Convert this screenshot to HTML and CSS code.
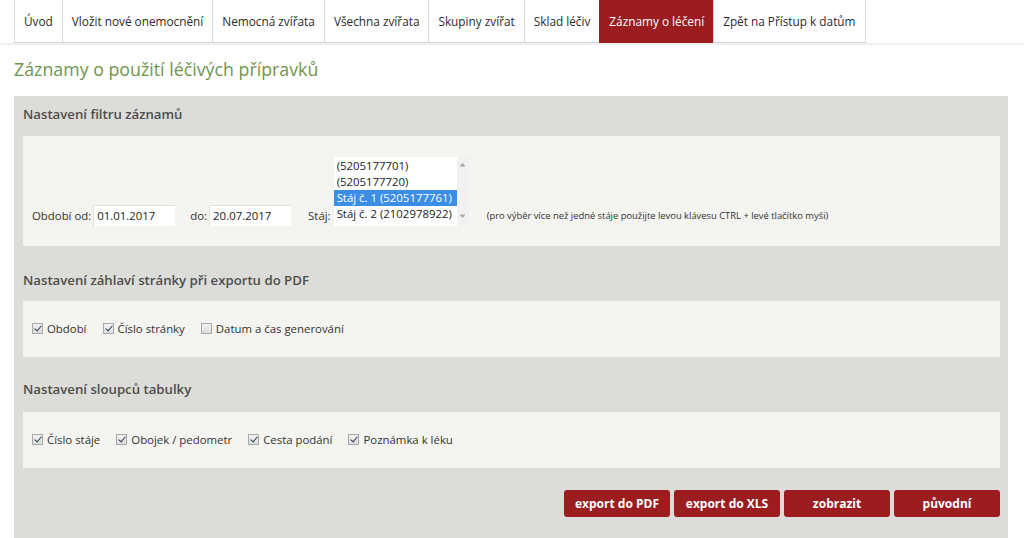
FILE: index.html
```html
<!DOCTYPE html>
<html lang="cs">
<head>
<meta charset="utf-8">
<title>Záznamy o léčení</title>
<link rel="stylesheet" href="styles.css">
</head>
<body>
<nav class="tabs">
  <a class="tab">Úvod</a>
  <a class="tab">Vložit nové onemocnění</a>
  <a class="tab">Nemocná zvířata</a>
  <a class="tab">Všechna zvířata</a>
  <a class="tab">Skupiny zvířat</a>
  <a class="tab">Sklad léčiv</a>
  <a class="tab active">Záznamy o léčení</a>
  <a class="tab">Zpět na Přístup k datům</a>
</nav>
<main class="main">
  <h1 class="page-title">Záznamy o použití léčivých přípravků</h1>
  <section class="panel">
    <h2 class="sec-title first">Nastavení filtru záznamů</h2>
    <div class="box box-filter">
      <label class="lbl">Období od:</label>
      <div class="input">01.01.2017</div>
      <label class="lbl lbl-do">do:</label>
      <div class="input">20.07.2017</div>
      <label class="lbl lbl-staj">Stáj:</label>
      <div class="listbox">
        <div class="options">
          <div class="opt">(5205177701)</div>
          <div class="opt">(5205177720)</div>
          <div class="opt selected">Stáj č. 1 (5205177761)</div>
          <div class="opt">Stáj č. 2 (2102978922)</div>
        </div>
        <div class="scrollbar">
          <svg class="arrow" width="7" height="5" viewBox="0 0 7 5"><path d="M0.5 4.5 L3.5 1 L6.5 4.5Z" fill="#a6a6a6"/></svg>
          <svg class="arrow" width="7" height="5" viewBox="0 0 7 5"><path d="M0.5 0.5 L3.5 4 L6.5 0.5Z" fill="#a6a6a6"/></svg>
        </div>
      </div>
      <span class="note">(pro výběr více než jedné stáje použijte levou klávesu CTRL + levé tlačítko myši)</span>
    </div>

    <h2 class="sec-title">Nastavení záhlaví stránky při exportu do PDF</h2>
    <div class="box box-checks">
      <label class="chk"><span class="cb on"></span>Období</label>
      <label class="chk"><span class="cb on"></span>Číslo stránky</label>
      <label class="chk"><span class="cb"></span>Datum a čas generování</label>
    </div>

    <h2 class="sec-title third">Nastavení sloupců tabulky</h2>
    <div class="box box-checks">
      <label class="chk"><span class="cb on"></span>Číslo stáje</label>
      <label class="chk"><span class="cb on"></span>Obojek / pedometr</label>
      <label class="chk"><span class="cb on"></span>Cesta podání</label>
      <label class="chk"><span class="cb on"></span>Poznámka k léku</label>
    </div>

    <div class="actions">
      <button class="btn">export do PDF</button>
      <button class="btn">export do XLS</button>
      <button class="btn">zobrazit</button>
      <button class="btn">původní</button>
    </div>
  </section>
</main>
</body>
</html>
```

FILE: styles.css
```css
* { box-sizing: border-box; }
html, body { margin: 0; padding: 0; background: #ffffff; }
body {
  font-family: "Open Sans", "Noto Sans", "DejaVu Sans", sans-serif;
  font-size: 11.4px;
  color: #333333;
  overflow: hidden;
}

/* tabs */
.tabs {
  display: flex;
  padding-left: 14px;
  border-bottom: 2px solid #efefef;
  height: 45px;
}
.tab {
  display: flex;
  align-items: center;
  height: 43px;
  padding: 0 9px 0 9px;
  border-left: 1px solid #d7d7d7;
  border-bottom: 1px solid #d7d7d7;
  color: #2b2b2b;
  font-size: 11.8px;
  white-space: nowrap;
  background: #ffffff;
}
.tab:last-child { border-right: 1px solid #d7d7d7; }
.tab.active {
  background: #9b1d20;
  color: #ffffff;
  border-color: #9b1d20;
  font-weight: 500;
}

.main {
  padding: 0 16px 0 14px;
}
.page-title {
  margin: 12px 0 0 0;
  height: 39px;
  font-size: 17.8px;
  line-height: 24px;
  font-weight: 400;
  color: #6f954d;
}

.panel {
  background: #dcdcd8;
  padding: 0 8px 30px 9px;
}
.sec-title {
  margin: 0;
  font-size: 13.2px;
  line-height: 20px;
  font-weight: 600;
  color: #4e4e4e;
  padding: 24px 0 11px 0;
}
.sec-title.first { padding: 8px 0 12px 0; }
.sec-title.third { padding: 22px 0 13px 0; }

.box {
  background: #f4f4f0;
  padding-left: 9px;
}
.box-filter {
  display: flex;
  align-items: flex-end;
  height: 110px;
  padding-top: 21px;
  padding-bottom: 20px;
}
.lbl {
  line-height: 21px;
  margin-right: 2px;
  color: #333;
}
.lbl-do { margin-left: 15px; }
.lbl-staj { margin-left: 17px; margin-right: 3px; }
.input {
  width: 82px;
  height: 21px;
  background: #ffffff;
  border-top: 1px solid #e2e2de;
  border-left: 1px solid #e2e2de;
  padding: 0 3px;
  line-height: 20px;
  color: #222;
}
.listbox {
  display: flex;
  width: 135px;
  height: 69px;
  background: #ffffff;
}
.options {
  flex: 1;
  padding-top: 1px;
}
.opt {
  height: 16px;
  line-height: 16px;
  padding-left: 3px;
  white-space: nowrap;
  color: #222;
}
.opt.selected {
  background: #3a8ee6;
  color: #ffffff;
}
.scrollbar {
  width: 12px;
  background: #f1f1f1;
  display: flex;
  flex-direction: column;
  justify-content: space-between;
  align-items: center;
  padding: 5px 0 7px;
}
.note {
  margin-left: 18px;
  font-size: 9.4px;
  line-height: 21px;
  color: #333;
}

.box-checks {
  display: flex;
  align-items: center;
  height: 56px;
  gap: 16px;
}
.chk {
  display: flex;
  align-items: center;
  line-height: 20px;
  color: #333;
}
.cb {
  width: 11px;
  height: 11px;
  margin-right: 4px;
  border: 1px solid #a9a9a9;
  background: linear-gradient(#f2f2f2, #dcdcdc);
  position: relative;
  top: -1px;
}
.cb.on::after {
  content: "";
  position: absolute;
  left: 3px;
  top: 0px;
  width: 3px;
  height: 6px;
  border-right: 1.5px solid #2a3f5f;
  border-bottom: 1.5px solid #2a3f5f;
  transform: rotate(40deg);
}

.actions {
  display: flex;
  justify-content: flex-end;
  gap: 4px;
  margin-top: 22px;
}
.btn {
  width: 106px;
  height: 27px;
  border: none;
  border-radius: 3px;
  background: #9b1d20;
  color: #ffffff;
  font-family: "Open Sans", "Noto Sans", sans-serif;
  font-size: 12px;
  font-weight: 700;
  padding: 0;
}
```
